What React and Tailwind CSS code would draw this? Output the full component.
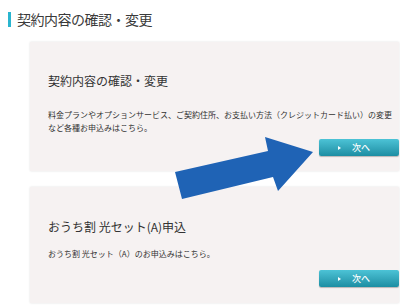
export default function App() {
  const font = { fontFamily: '"Noto Sans CJK JP", "Noto Sans", sans-serif' };
  const NextButton = () => (
    <div className="flex justify-end">
      <div className="w-[80px] h-[17px] rounded-[2px] bg-gradient-to-b from-[#4cc3d6] to-[#1b8ea3] shadow-[0_1px_1px_rgba(0,0,0,0.25)] flex items-center pl-[19px]">
        <svg width="3" height="4" viewBox="0 0 3 4" className="block">
          <polygon points="0,0 3,2 0,4" fill="#ffffff" />
        </svg>
        <span className="ml-[11px] text-[9px] leading-[17px] text-white font-medium">次へ</span>
      </div>
    </div>
  );
  return (
    <div className="relative w-[400px] h-[308px] bg-white overflow-hidden text-[#333333]" style={font}>
      <div className="flex items-center h-[16px] mt-[11px] ml-[8px]">
        <div className="w-[3px] h-[15px] bg-[#2ab5cf]" />
        <div className="ml-[6px] text-[14px] leading-[16px] tracking-[-0.5px] text-[#3a3a3a]">契約内容の確認・変更</div>
      </div>

      <div className="mt-[15px] ml-[30px] w-[369px] bg-[#f6f2f2] shadow-[0_0_2px_rgba(0,0,0,0.12)] pl-[18px] pt-[31px] pb-[15px]">
        <div className="text-[12px] leading-[16px]">契約内容の確認・変更</div>
        <div className="mt-[19px] text-[8px] leading-[13px]">
          料金プランやオプションサービス、ご契約住所、お支払い方法（クレジットカード払い）の変更
          <br />
          など各種お申込みはこちら。
        </div>
        <div className="mt-[5px]">
          <NextButton />
        </div>
      </div>

      <div className="mt-[16px] ml-[30px] w-[369px] bg-[#f6f2f2] shadow-[0_0_2px_rgba(0,0,0,0.12)] pl-[18px] pt-[32px] pb-[16px]">
        <div className="text-[12px] leading-[16px]">おうち割 光セット(A)申込</div>
        <div className="mt-[12px] text-[8px] leading-[13px]">おうち割 光セット（A）のお申込みはこちら。</div>
        <div className="mt-[10px]">
          <NextButton />
        </div>
      </div>

      <svg className="absolute left-0 top-0 pointer-events-none" width="400" height="308" viewBox="0 0 400 308">
        <polygon
          points="175,172 268,151 265,137 313,152 278,191 273,177 182,199"
          fill="#1f63b5"
        />
      </svg>
    </div>
  );
}
